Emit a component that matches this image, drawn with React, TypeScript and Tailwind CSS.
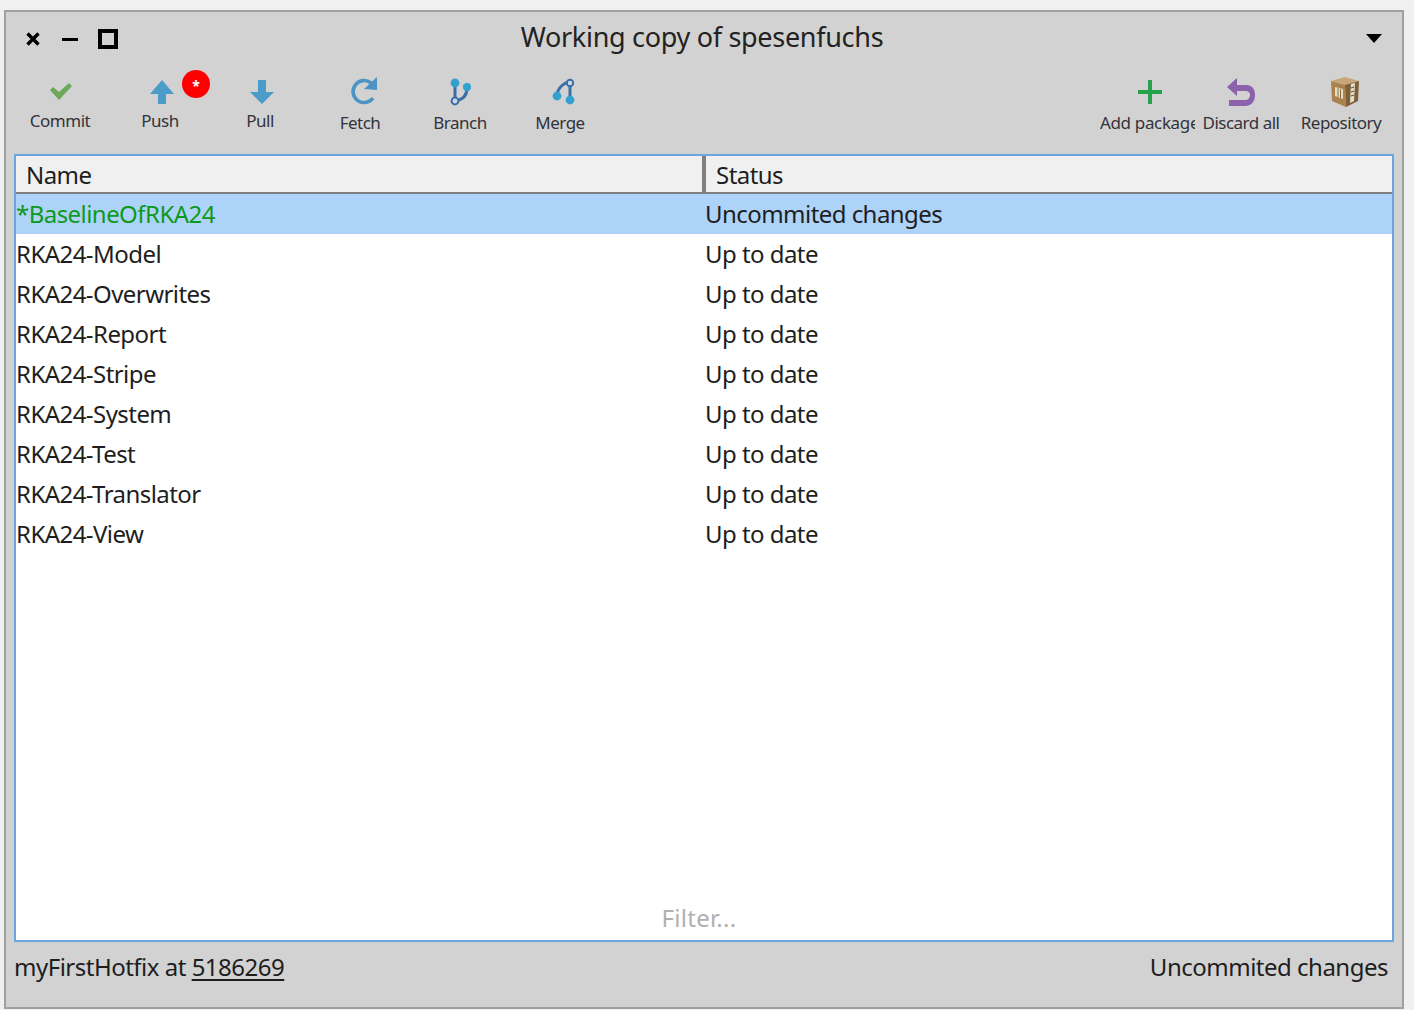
// Pharo Iceberg "Working copy" window
const font = { fontFamily: '"Noto Sans", sans-serif' };

const packages = [
  "RKA24-Model",
  "RKA24-Overwrites",
  "RKA24-Report",
  "RKA24-Stripe",
  "RKA24-System",
  "RKA24-Test",
  "RKA24-Translator",
  "RKA24-View",
];

function CheckIcon() {
  return (
    <svg className="ml-[2px]" width="24" height="20" viewBox="0 0 24 20">
      <path d="M1 8 L4 5 L10 10 L20 1 L23 4 L10 18 Z" fill="#6ca95c" />
    </svg>
  );
}

function ArrowUp() {
  return (
    <svg className="ml-[4px]" width="24" height="24" viewBox="0 0 24 24">
      <path d="M12 0 L24 14 L16 14 L16 24 L8 24 L8 14 L0 14 Z" fill="#4b9cc9" />
    </svg>
  );
}

function ArrowDown() {
  return (
    <svg className="ml-[4px]" width="24" height="24" viewBox="0 0 24 24">
      <path d="M8 0 L16 0 L16 12 L24 12 L12 24 L0 12 L8 12 Z" fill="#4b9cc9" />
    </svg>
  );
}

function FetchIcon() {
  return (
    <svg className="ml-[7px]" width="30" height="30" viewBox="0 0 30 30">
      <path d="M24 21 A11 11 0 1 1 22 6" fill="none" stroke="#4b94c4" strokeWidth="3.6" />
      <path d="M28 0 L28 13 L15 12 Z" fill="#4b94c4" />
    </svg>
  );
}

function BranchIcon() {
  return (
    <svg className="ml-[2px]" width="24" height="28" viewBox="0 0 24 28">
      <path d="M6 5 V24 M6 23 C13 22 18 18 18 10" fill="none" stroke="#3c6ea6" strokeWidth="3" />
      <circle cx="6" cy="5" r="4.4" fill="#33a1cf" />
      <circle cx="18" cy="9" r="4" fill="#33a1cf" />
      <circle cx="6" cy="23" r="3.4" fill="#c9dbe8" stroke="#3c6ea6" strokeWidth="2" />
    </svg>
  );
}

function MergeIcon() {
  return (
    <svg className="ml-[8px]" width="24" height="28" viewBox="0 0 24 28">
      <path d="M18 4 V22 M5 17 C6 10 11 5 18 4" fill="none" stroke="#3c6ea6" strokeWidth="3" />
      <circle cx="18" cy="5" r="3.2" fill="#c9dbe8" stroke="#3c6ea6" strokeWidth="2" />
      <circle cx="5" cy="18" r="4.4" fill="#33a1cf" />
      <circle cx="18" cy="22" r="4.4" fill="#33a1cf" />
    </svg>
  );
}

function PlusIcon() {
  return (
    <svg width="26" height="26" viewBox="0 0 26 26">
      <path d="M11 1 H15 V11 H25 V15 H15 V25 H11 V15 H1 V11 H11 Z" fill="#27a24c" />
    </svg>
  );
}

function UndoIcon() {
  return (
    <svg className="ml-[2px]" width="30" height="30" viewBox="0 0 30 30">
      <path d="M10 1 V8 H19 C25 8 28 12 28 18 C28 25 24 29 18 29 H2 V23 H18 C21 23 23 21 23 18 C23 15 21 14 18 14 H10 V19 L0 10 Z" fill="#8d62ad" />
    </svg>
  );
}

function BoxIcon() {
  return (
    <svg className="ml-[8px]" width="32" height="32" viewBox="0 0 32 32">
      <path d="M2 5 L16 1 L30 5 L16 9 Z" fill="#c9a679" />
      <path d="M2 5 L16 9 L17 31 L3 25 Z" fill="#a9824f" />
      <path d="M16 9 L30 5 L29 25 L17 31 Z" fill="#7f5f38" />
      <path d="M6 11 L14 13 L14 23 L6 20 Z" fill="#e5dcc6" />
      <path d="M9 12 V21 M11.5 13 V22" stroke="#8a6a3e" strokeWidth="1" />
      <path d="M22 8 L26 7 L25 25 L21 27 Z" fill="#e5e0d0" />
      <path d="M22 12 L25 11 M22 16 L25 15 M22 20 L25 19" stroke="#6b5434" strokeWidth="1.2" />
    </svg>
  );
}

function ToolButton({
  label,
  icon,
  badge,
  raised,
  clipped,
}: {
  label: string;
  icon: React.ReactNode;
  badge?: boolean;
  raised?: boolean;
  clipped?: boolean;
}) {
  return (
    <div className={`relative flex h-[72px] w-[100px] flex-col items-center ${clipped ? "mr-[-9px]" : ""}`}>
      <div className="flex h-[44px] items-center justify-center pt-[8px]">{icon}</div>
      {clipped ? (
        <span className="mt-[1px] w-[100px] whitespace-nowrap text-[17px] leading-[24px] tracking-[-0.35px] text-[#33333a]">
          <span className="block w-[95px] overflow-hidden">{label}</span>
        </span>
      ) : (
        <span
          className={`whitespace-nowrap text-[17px] leading-[24px] tracking-[-0.5px] text-[#33333a] ${raised ? "mt-[-1px]" : "mt-[1px]"}`}
        >
          {label}
        </span>
      )}
      {badge && (
        <span className="absolute left-[72px] top-[4px] flex h-[28px] w-[28px] items-center justify-center rounded-full bg-[#fe0000] text-[14px] font-bold leading-none text-white">
          <span className="mt-[3px]">*</span>
        </span>
      )}
    </div>
  );
}

export default function App() {
  return (
    <div className="h-[1010px] w-[1414px] overflow-hidden bg-[#f0f0f0] pl-[4px] pt-[10px]" style={font}>
      <div className="flex h-[999px] w-[1400px] flex-col border-2 border-[#a0a0a0] bg-[#d2d2d2]">
        {/* title bar */}
        <div className="relative flex h-[48px] shrink-0 items-center justify-center pt-[2px]">
          <div className="absolute left-[20px] top-[17px] flex items-center">
            <svg width="14" height="14" viewBox="0 0 14 14">
              <path d="M1.5 1.5 L12.5 12.5 M12.5 1.5 L1.5 12.5" stroke="#000" strokeWidth="3.4" />
            </svg>
            <div className="ml-[22px] h-[3px] w-[16px] bg-black" />
            <div className="ml-[20px] h-[20px] w-[20px] border-[4px] border-black" />
          </div>
          <span className="mr-[4px] text-[27px] leading-[34px] tracking-[-0.3px] text-[#222]">
            Working copy of spesenfuchs
          </span>
          <svg className="absolute right-[20px] top-[22px]" width="16" height="9" viewBox="0 0 16 9">
            <path d="M0 0 H16 L8 9 Z" fill="#000" />
          </svg>
        </div>

        {/* toolbar */}
        <div className="flex h-[94px] shrink-0 items-start justify-between pl-[4px] pr-[11px] pt-[6px]">
          <div className="flex">
            <ToolButton label="Commit" icon={<CheckIcon />} raised />
            <ToolButton label="Push" icon={<ArrowUp />} badge raised />
            <ToolButton label="Pull" icon={<ArrowDown />} raised />
            <ToolButton label="Fetch" icon={<FetchIcon />} />
            <ToolButton label="Branch" icon={<BranchIcon />} />
            <ToolButton label="Merge" icon={<MergeIcon />} />
          </div>
          <div className="flex">
            <ToolButton label="Add package" icon={<PlusIcon />} clipped />
            <ToolButton label="Discard all" icon={<UndoIcon />} />
            <ToolButton label="Repository" icon={<BoxIcon />} />
          </div>
        </div>

        {/* table */}
        <div className="mx-[8px] flex h-[788px] shrink-0 flex-col border-2 border-[#6aa5e0] bg-white text-[24px] leading-[40px] tracking-[-0.55px] text-[#1e1e1e]">
          <div className="flex h-[38px] shrink-0 border-b-2 border-[#808080] bg-[#f0f0f0] leading-[37px]">
            <div className="w-[690px] shrink-0 border-r-4 border-[#808080] pl-[10px]">Name</div>
            <div className="pl-[10px]">Status</div>
          </div>
          <div className="flex h-[40px] bg-[#aed3f9]">
            <div className="w-[689px] shrink-0 text-[#0d9a1c]">*BaselineOfRKA24</div>
            <div>Uncommited changes</div>
          </div>
          {packages.map((name) => (
            <div key={name} className="flex h-[40px]">
              <div className="w-[689px] shrink-0">{name}</div>
              <div>Up to date</div>
            </div>
          ))}
          <div className="flex-1" />
          <div className="mb-[4px] h-[36px] pr-[10px] text-center leading-[36px] tracking-[0.3px] text-[#b0b0b0]">Filter...</div>
        </div>

        {/* status bar */}
        <div className="flex items-center justify-between pl-[8px] pr-[14px] pt-[5px] text-[24px] leading-[40px] tracking-[-0.5px] text-[#1e1e1e]">
          <span>
            myFirstHotfix at <span className="underline underline-offset-[3px]">5186269</span>
          </span>
          <span>Uncommited changes</span>
        </div>
      </div>
    </div>
  );
}
